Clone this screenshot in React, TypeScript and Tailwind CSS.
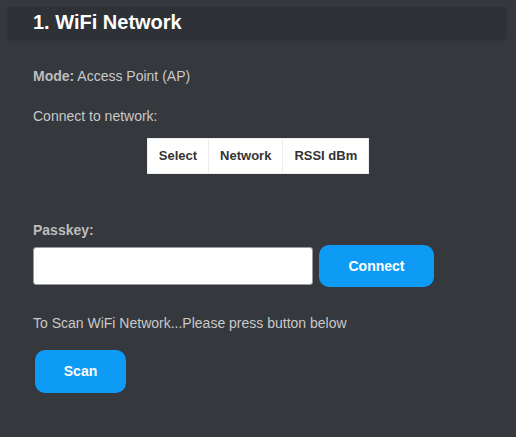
import React from "react";

export default function App() {
  return (
    <div
      className="min-h-[437px] w-full bg-[#35383d] pt-[7px]"
      style={{ fontFamily: '"Liberation Sans", Arial, sans-serif' }}
    >
      <div className="ml-[8px] mr-[10px] flex h-[31px] items-center bg-[#2e3136] pl-[25px] shadow-[0_1px_3px_rgba(0,0,0,0.25)]">
        <h1 className="text-[20px] font-bold leading-[23px] text-white">1. WiFi Network</h1>
      </div>

      <div className="pl-[33px]">
        <p className="mt-[30px] text-[14px] leading-[16px] text-[#c9c9c9]">
          <span className="font-bold text-[#bdbdbd]">Mode:</span> Access Point (AP)
        </p>
        <p className="mt-[24px] text-[14px] leading-[16px] text-[#c9c9c9]">Connect to network:</p>
      </div>

      <div className="mt-[14px] flex justify-center pl-[8px] pr-[8px]">
        <table className="border-collapse bg-white text-[13px] font-bold text-[#333]">
          <thead>
            <tr className="h-[35px]">
              <th className="border border-[#eeeeee] px-[11px] font-bold">Select</th>
              <th className="border border-[#eeeeee] px-[11px] font-bold">Network</th>
              <th className="border border-[#eeeeee] px-[11px] font-bold">RSSI dBm</th>
            </tr>
          </thead>
        </table>
      </div>

      <div className="pl-[33px]">
        <p className="mt-[48px] text-[14px] font-bold leading-[16px] text-[#bdbdbd]">Passkey:</p>
        <div className="mt-[7px] flex h-[42px] items-center">
          <input
            type="password"
            className="h-[38px] w-[280px] rounded-[3px] border border-[#9a9a9a] bg-white px-2 text-[13px] outline-none"
          />
          <button className="ml-[6px] h-[42px] w-[115px] rounded-[10px] bg-[#0d9bf5] text-[14px] font-bold text-white">
            Connect
          </button>
        </div>
        <p className="mt-[28px] text-[14px] leading-[16px] text-[#c9c9c9]">
          To Scan WiFi Network...Please press button below
        </p>
        <button className="ml-[2px] mt-[19px] h-[43px] w-[91px] rounded-[10px] bg-[#0d9bf5] text-[14px] font-bold text-white">
          Scan
        </button>
      </div>
    </div>
  );
}
